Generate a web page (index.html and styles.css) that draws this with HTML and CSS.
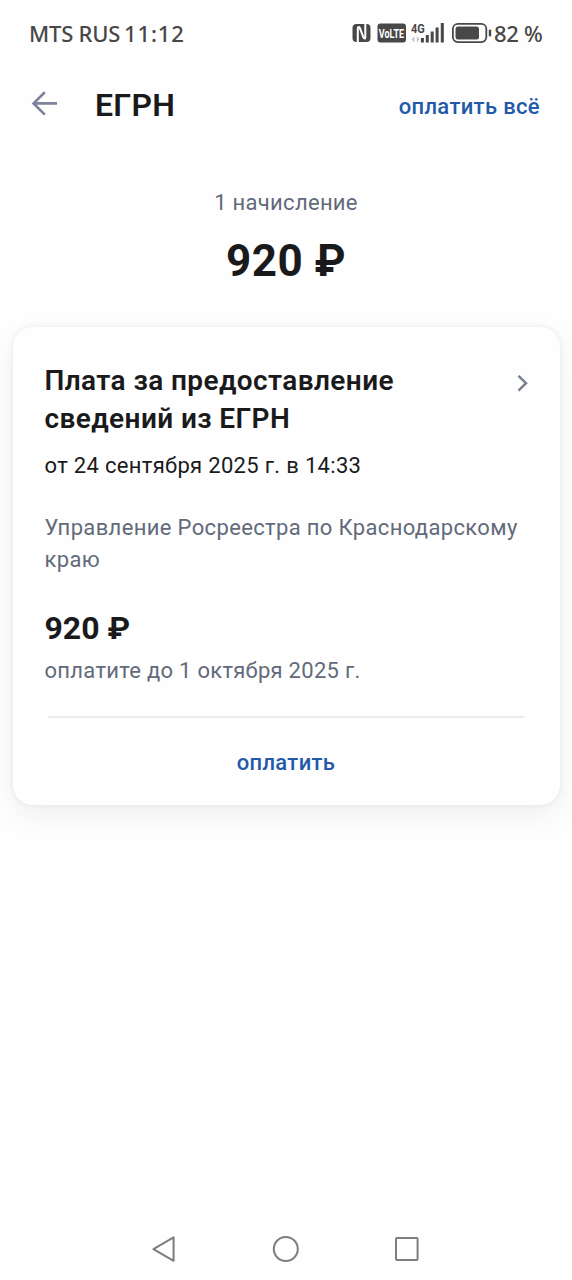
FILE: index.html
```html
<!DOCTYPE html>
<html lang="ru">
<head>
<meta charset="utf-8">
<title>ЕГРН</title>
<link rel="stylesheet" href="styles.css">
</head>
<body>
<div class="screen">
  <div class="status">
    <span class="carrier">MTS RUS</span>
    <span class="clock">11:12</span>
    <svg class="status-icons" width="140" height="30" viewBox="0 0 140 30">
      <rect x="0.5" y="6" width="18" height="18" rx="4" fill="#484848"/>
      <path d="M5.8 24V10.2C5.8 8.6 7 8.6 7.8 9.8L11.4 19.4C12.2 21 13.3 21 13.3 19.4V6" fill="none" stroke="#fff" stroke-width="2"/>
      <rect x="25.5" y="5.5" width="28.5" height="19" rx="3" fill="#484848"/>
      <text class="volte" transform="translate(26.8 19.8) scale(1 1.5)">VoLTE</text>
      <text class="gen" transform="translate(59 15) scale(1 1.15)">4G</text>
      <path d="M62.4 18L59.6 21.3L62.4 24.5ZM64.8 18L67.6 21.3L64.8 24.5Z" fill="#c4c4c4"/>
      <path d="M70.4 24.5V20M75.3 24.5V17M80.2 24.5V13.5M85.1 24.5V9.5M90.3 24.5V5" fill="none" stroke="#484848" stroke-width="3"/>
      <rect x="100.9" y="5.9" width="33.4" height="18.2" rx="5" fill="none" stroke="#484848" stroke-width="1.8"/>
      <rect x="103.5" y="8.5" width="23.5" height="13" rx="2.5" fill="#484848"/>
      <rect x="136.8" y="11.5" width="2.4" height="7" rx="1" fill="#484848"/>
    </svg>
    <span class="percent">82 %</span>
  </div>

  <header class="bar">
    <svg class="back" width="28" height="28" viewBox="0 0 28 28">
      <path d="M26 14.4H3M13.8 3.2L2.6 14.4L13.8 25.6" fill="none" stroke="#7b849b" stroke-width="2.7"/>
    </svg>
    <h1 class="heading">ЕГРН</h1>
    <a class="link pay-all">оплатить всё</a>
  </header>

  <section class="summary">
    <div class="count">1 начисление</div>
    <div class="total">920 ₽</div>
  </section>

  <article class="card">
    <div class="card-head">
      <h2 class="card-title">Плата за предоставление сведений из ЕГРН</h2>
      <svg class="chevron" width="14" height="20" viewBox="0 0 14 20">
        <path d="M2.5 2.8L10 10.2L2.5 17.6" fill="none" stroke="#7b8090" stroke-width="2.5"/>
      </svg>
    </div>
    <div class="date">от 24 сентября 2025 г. в 14:33</div>
    <div class="issuer">Управление Росреестра по Краснодарскому краю</div>
    <div class="amount">920 ₽</div>
    <div class="due">оплатите до 1 октября 2025 г.</div>
    <hr class="divider">
    <a class="link pay">оплатить</a>
  </article>

  <nav class="system-nav">
    <svg width="30" height="30" viewBox="0 0 30 30"><path d="M4.4 15.2L24.6 3.4V26.8Z" fill="none" stroke="#7d7d7d" stroke-width="2" stroke-linejoin="round"/></svg>
    <svg width="30" height="30" viewBox="0 0 30 30"><circle cx="15.8" cy="15" r="12" fill="none" stroke="#7d7d7d" stroke-width="2"/></svg>
    <svg width="30" height="30" viewBox="0 0 30 30"><rect x="5" y="4" width="21.6" height="22" rx="1" fill="none" stroke="#7d7d7d" stroke-width="2"/></svg>
  </nav>
</div>
</body>
</html>
```
FILE: styles.css
```css
* { box-sizing: border-box; margin: 0; padding: 0; }
body { background: #fefefe; font-family: Roboto, sans-serif; color: #1a1a1c; }
.screen {
  width: 572px;
  height: 1280px;
  display: flex;
  flex-direction: column;
  overflow: hidden;
}
.status {
  display: flex;
  height: 66px;
  padding: 18px 0 0 29px;
  font: 500 22px/30px "Noto Sans", sans-serif;
  color: #484848;
  white-space: nowrap;
}
.carrier { width: 95px; letter-spacing: -0.2px; }
.clock { width: 228px; letter-spacing: 0.9px; }
.status-icons { flex: none; }
.percent { margin-left: 2px; letter-spacing: -0.3px; }
.volte { font: 700 9px Roboto, sans-serif; fill: #fff; }
.gen { font: 700 11px Roboto, sans-serif; fill: #484848; }

.bar { display: flex; height: 80px; padding: 0 32px 0 31px; }
.back { margin-top: 23px; flex: none; }
.heading { margin: 19px 0 0 36px; font-size: 32px; line-height: 40px; font-weight: 600; letter-spacing: 0.3px; }
.link { color: #2259a8; font-size: 22px; line-height: 32px; font-weight: 500; letter-spacing: 0.35px; }
.pay-all { margin: 25px 0 0 auto; }

.summary { height: 181px; padding-top: 41px; text-align: center; }
.count { color: #626a7a; font-size: 22px; line-height: 32px; letter-spacing: 0.3px; }
.total { margin-top: 15px; font-size: 44px; line-height: 54px; font-weight: 700; letter-spacing: 0.5px; }

.card {
  width: 547px;
  height: 478px;
  margin-left: 12.5px;
  padding: 35px 32px 0 32px;
  border-radius: 20px;
  background: #fefefe;
  box-shadow: 0 0 6px rgba(0, 0, 0, 0.08), 0 12px 32px rgba(0, 0, 0, 0.06);
  display: flex;
  flex-direction: column;
}
.card-head { display: flex; justify-content: space-between; }
.card-title { width: 380px; font-size: 28px; line-height: 38px; font-weight: 600; letter-spacing: 0.4px; }
.chevron { margin: 11px -2px 0 0; }
.date { margin-top: 12px; font-size: 22px; line-height: 32px; letter-spacing: 0.32px; }
.issuer { margin-top: 30px; color: #626a7a; font-size: 22px; line-height: 32px; letter-spacing: 0.35px; }
.amount { margin-top: 32px; font-size: 32px; line-height: 40px; font-weight: 700; }
.due { margin-top: 7px; color: #626a7a; font-size: 22px; line-height: 32px; letter-spacing: 0.28px; }
.divider { margin: 29px 4px 0 3.5px; border: 0; height: 2px; background: #ececee; flex: none; }
.pay { margin-top: 29px; text-align: center; }

.system-nav { display: flex; gap: 91px; margin-top: auto; padding: 0 0 16px 149px; }
```
